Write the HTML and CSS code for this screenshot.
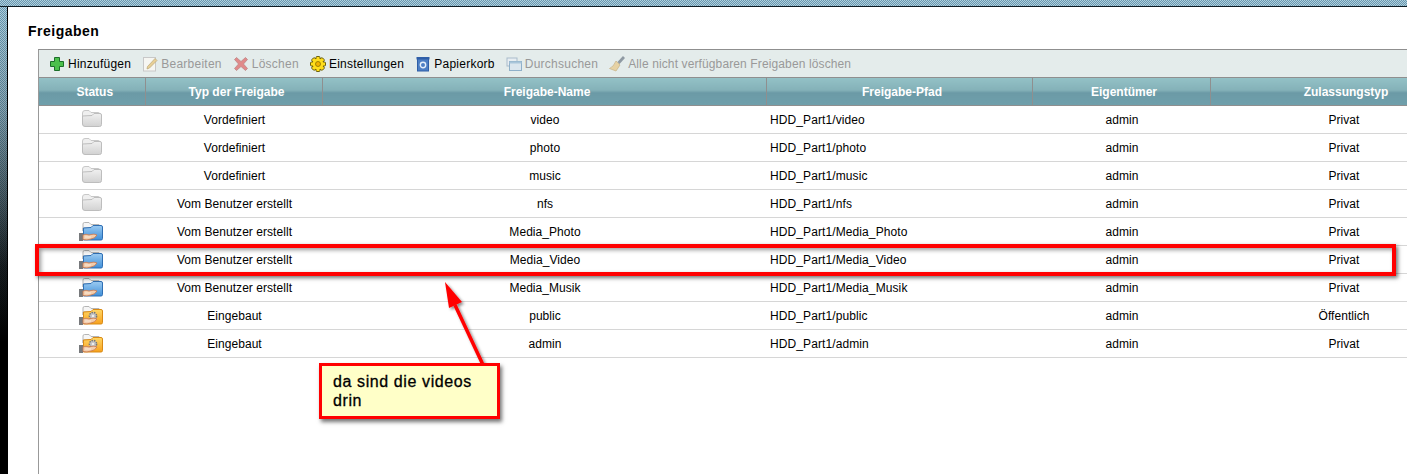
FILE: index.html
```html
<!DOCTYPE html>
<html lang="de">
<head>
    <meta charset="UTF-8">
    <title>Freigaben</title>
    <link rel="stylesheet" href="styles.css">
</head>
<body>
    <svg class="defs" width="0" height="0">
        <defs>
            <linearGradient id="greyFront" x1="0" y1="0" x2="0" y2="1"><stop offset="0" stop-color="#f0f0f0"/><stop offset="1" stop-color="#d2d2d2"/></linearGradient>
            <linearGradient id="blueFront" x1="0" y1="0" x2="0" y2="1"><stop offset="0" stop-color="#9ccbf2"/><stop offset="1" stop-color="#3f8fd8"/></linearGradient>
            <linearGradient id="orangeFront" x1="0" y1="0" x2="0" y2="1"><stop offset="0" stop-color="#ffd765"/><stop offset="1" stop-color="#f7a11d"/></linearGradient>
            <symbol id="folderGrey" viewBox="0 0 20 17">
                <path d="M0.500 3 Q0.500 0.500 3 0.500 H7 L9 2.500 H16 Q18 2.500 18 4.500 V7 H0.500Z" fill="#efefef" stroke="#c8c8c8"/>
                <path d="M0.500 6 L10 5.500 L12 3.500 H18 Q19.500 3.500 19.500 5 V14.500 Q19.500 16.500 17.500 16.500 H3 Q0.500 16.500 0.500 14Z" fill="url(#greyFront)" stroke="#bdbdbd"/>
            </symbol>
            <symbol id="hand" viewBox="0 0 24 20">
                <path d="M0 11 H4 V19 H0Z" fill="#77797c"/>
                <path d="M4 13 Q7 11.500 10 13 L12 12.500 Q15 11.500 18 13 Q16 16.500 12 17 Q8 18.500 4 17.500Z" fill="#f3cdac" stroke="#c9764a" stroke-width="0.800"/>
                <path d="M6 15 H12" stroke="#fff" stroke-width="0.600"/>
            </symbol>
            <symbol id="folderBlue" viewBox="0 0 24 20">
                <path d="M4 9 V2 Q4 0.500 5.500 0.500 H10 L12 2.500 H20 V6 H4Z" fill="#f6f6f6" stroke="#b5b5b5"/>
                <path d="M4.500 6 L12 5.500 L14 3.500 H22 Q23.500 3.500 23.500 5 V16.500 Q23.500 18 22 18 H4.500Z" fill="url(#blueFront)" stroke="#2f6fb4"/>
                <use href="#hand" width="24" height="20"/>
            </symbol>
            <symbol id="folderOrange" viewBox="0 0 24 20">
                <path d="M4 9 V2 Q4 0.500 5.500 0.500 H10 L12 2.500 H20 V6 H4Z" fill="#f6f6f6" stroke="#b5b5b5"/>
                <path d="M4.500 6 L12 5.500 L14 3.500 H22 Q23.500 3.500 23.500 5 V16.500 Q23.500 18 22 18 H4.500Z" fill="url(#orangeFront)" stroke="#d98a15"/>
                <circle cx="14" cy="10" r="3.600" fill="#c4c4c4" stroke="#777" stroke-width="1.500" stroke-dasharray="1.500 1"/>
                <circle cx="14" cy="10" r="1.200" fill="#eee"/>
                <use href="#hand" width="24" height="20"/>
            </symbol>
        </defs>
    </svg>

    <div class="top-band"></div>
    <div class="page">
        <div class="side-band"></div>
        <main class="window">
            <h1 class="title">Freigaben</h1>
            <section class="panel">
                <div class="toolbar">
                    <span class="tool">
                        <svg class="ico" viewBox="0 0 16 16"><path d="M5.500 1.500 H10.500 V5.500 H14.500 V10.500 H10.500 V14.500 H5.500 V10.500 H1.500 V5.500 H5.500Z" fill="#4cc04c" stroke="#1c6f2a"/></svg>
                        Hinzufügen
                    </span>
                    <span class="tool off">
                        <svg class="ico" viewBox="0 0 16 16"><rect x="1.500" y="1.500" width="12" height="13.500" fill="#f6f6f2" stroke="#c8c8c8"/><path d="M5.500 10.500 L13 2.500 L15 4.500 L7.500 12 L5 13Z" fill="#e8cf96" stroke="#b9a878" stroke-width="0.700"/></svg>
                        Bearbeiten
                    </span>
                    <span class="tool off">
                        <svg class="ico" viewBox="0 0 16 16"><path d="M1.500 3.500 L3.500 1.500 L8 5.500 L12.500 1.500 L14.500 3.500 L10.500 8 L14.500 12.500 L12.500 14.500 L8 10.500 L3.500 14.500 L1.500 12.500 L5.500 8Z" fill="#e08a8a" stroke="#b98080" stroke-width="0.700"/></svg>
                        Löschen
                    </span>
                    <span class="tool">
                        <svg class="ico" viewBox="0 0 16 16">
                            <g fill="#ffdd1c" stroke="#5e5200" stroke-width="0.900">
                                <rect x="6" y="0.500" width="4" height="15" rx="1"/>
                                <rect x="6" y="0.500" width="4" height="15" rx="1" transform="rotate(45 8 8)"/>
                                <rect x="6" y="0.500" width="4" height="15" rx="1" transform="rotate(90 8 8)"/>
                                <rect x="6" y="0.500" width="4" height="15" rx="1" transform="rotate(135 8 8)"/>
                            </g>
                            <circle cx="8" cy="8" r="5.400" fill="#ffdd1c"/>
                            <circle cx="8" cy="8" r="2.500" fill="#f3b400" stroke="#8a7200" stroke-width="0.800"/>
                        </svg>
                        Einstellungen
                    </span>
                    <span class="tool">
                        <svg class="ico" viewBox="0 0 16 16"><rect x="1.500" y="1" width="13" height="2.500" fill="#2f5fa8"/><rect x="2.500" y="3" width="11" height="12" fill="#4d7fc4" stroke="#2f5fa8"/><circle cx="8" cy="9" r="2.700" fill="none" stroke="#e6f0fa" stroke-width="1.400"/></svg>
                        Papierkorb
                    </span>
                    <span class="tool off">
                        <svg class="ico" viewBox="0 0 16 16"><rect x="1" y="2" width="10" height="8" fill="#e8eef2" stroke="#a9bccb"/><rect x="3.500" y="5.500" width="12" height="9" fill="#dbe6ee" stroke="#8fb0c9"/><rect x="3.500" y="5.500" width="12" height="2" fill="#a9c5da"/></svg>
                        Durchsuchen
                    </span>
                    <span class="tool off tool-long">
                        <svg class="ico" viewBox="0 0 16 16"><path d="M9.500 7 L15 1" stroke="#8f9aa3" stroke-width="2.800"/><path d="M7 5 L11 9 L7 15 L0.500 12.500 Q4.500 11 7 5Z" fill="#e6d2a4" stroke="#c7b285" stroke-width="0.700"/></svg>
                        Alle nicht verfügbaren Freigaben löschen
                    </span>
                </div>
                <table class="shares">
                    <colgroup>
                        <col class="c-status"><col class="c-type"><col class="c-name"><col class="c-path"><col class="c-owner"><col class="c-access">
                    </colgroup>
                    <thead>
                        <tr><th>Status</th><th>Typ der Freigabe</th><th>Freigabe-Name</th><th>Freigabe-Pfad</th><th>Eigentümer</th><th class="access-head">Zulassungstyp</th></tr>
                    </thead>
                    <tbody>
                        <tr><td class="status"><svg class="folder"><use href="#folderGrey" x="3" y="0" width="20" height="17"/></svg></td><td>Vordefiniert</td><td>video</td><td class="path">HDD_Part1/video</td><td>admin</td><td class="access">Privat</td></tr>
                        <tr><td class="status"><svg class="folder"><use href="#folderGrey" x="3" y="0" width="20" height="17"/></svg></td><td>Vordefiniert</td><td>photo</td><td class="path">HDD_Part1/photo</td><td>admin</td><td class="access">Privat</td></tr>
                        <tr><td class="status"><svg class="folder"><use href="#folderGrey" x="3" y="0" width="20" height="17"/></svg></td><td>Vordefiniert</td><td>music</td><td class="path">HDD_Part1/music</td><td>admin</td><td class="access">Privat</td></tr>
                        <tr><td class="status"><svg class="folder"><use href="#folderGrey" x="3" y="0" width="20" height="17"/></svg></td><td>Vom Benutzer erstellt</td><td>nfs</td><td class="path">HDD_Part1/nfs</td><td>admin</td><td class="access">Privat</td></tr>
                        <tr><td class="status"><svg class="folder"><use href="#folderBlue" width="24" height="20"/></svg></td><td>Vom Benutzer erstellt</td><td>Media_Photo</td><td class="path">HDD_Part1/Media_Photo</td><td>admin</td><td class="access">Privat</td></tr>
                        <tr><td class="status"><svg class="folder"><use href="#folderBlue" width="24" height="20"/></svg></td><td>Vom Benutzer erstellt</td><td>Media_Video</td><td class="path">HDD_Part1/Media_Video</td><td>admin</td><td class="access">Privat</td></tr>
                        <tr><td class="status"><svg class="folder"><use href="#folderBlue" width="24" height="20"/></svg></td><td>Vom Benutzer erstellt</td><td>Media_Musik</td><td class="path">HDD_Part1/Media_Musik</td><td>admin</td><td class="access">Privat</td></tr>
                        <tr><td class="status"><svg class="folder"><use href="#folderOrange" width="24" height="20"/></svg></td><td>Eingebaut</td><td>public</td><td class="path">HDD_Part1/public</td><td>admin</td><td class="access">Öffentlich</td></tr>
                        <tr><td class="status"><svg class="folder"><use href="#folderOrange" width="24" height="20"/></svg></td><td>Eingebaut</td><td>admin</td><td class="path">HDD_Part1/admin</td><td>admin</td><td class="access">Privat</td></tr>
                    </tbody>
                </table>
            </section>
        </main>
    </div>

    <!-- Annotations drawn over the screenshot -->
    <div class="mark"></div>
    <svg class="arrow" width="60" height="100" viewBox="0 0 60 100">
        <defs><filter id="arrowShadow" x="-30%" y="-30%" width="160%" height="160%"><feDropShadow dx="2" dy="2" stdDeviation="1.500" flood-color="#000" flood-opacity="0.450"/></filter></defs>
        <g filter="url(#arrowShadow)">
            <path d="M44 89 L15 27" stroke="#f00" stroke-width="3.500" fill="none"/>
            <path d="M5 4 L9 30 L22 24Z" fill="#f00"/>
        </g>
    </svg>
    <div class="note">da sind die videos drin</div>
</body>
</html>
```

FILE: styles.css
```css
html, body {
    margin: 0;
    height: 474px;
    overflow: hidden;
}

body {
    font-family: "Liberation Sans", Arial, sans-serif;
    font-size: 12px;
    color: #000;
    background-color: #fff;
    position: relative;
}

.defs {
    position: absolute;
}

.top-band {
    height: 6px;
    background: repeating-conic-gradient(#6797b0 0 25%, #b0cfdc 0 50%) 0 0 / 2px 2px;
    border-bottom: 1px solid #0b1a22;
}

.page {
    display: flex;
    height: 467px;
}

.side-band {
    width: 7px;
    background:
        linear-gradient(to bottom, rgba(0, 0, 0, 0) 0, rgba(0, 0, 0, 0.2) 100px, rgba(0, 0, 0, 0.55) 190px, rgba(0, 0, 0, 0.85) 260px, #000 335px),
        repeating-conic-gradient(#6797b0 0 25%, #b0cfdc 0 50%) 0 0 / 2px 2px;
    border-right: 1px solid #000;
}

.window {
    flex: 1;
    min-width: 0;
    padding: 16px 0 0 30px;
}

.title {
    margin: 0 0 10px -10px;
    font-size: 14px;
    line-height: 16px;
    letter-spacing: 0.5px;
    font-weight: bold;
}

.panel {
    border-left: 1px solid #999;
    border-top: 1px solid #8f8f8f;
    height: 425px;
    overflow: hidden;
}

.toolbar {
    display: flex;
    align-items: center;
    gap: 11px;
    height: 27px;
    padding-left: 10px;
    background-color: #e4eceb;
    border-bottom: 1px solid #8f8f8f;
}

.tool {
    display: flex;
    align-items: center;
    gap: 3px;
    white-space: nowrap;
    letter-spacing: 0.25px;
}

.tool.tool-long {
    letter-spacing: 0.12px;
}

.tool.off {
    color: #999;
}

.ico {
    width: 16px;
    height: 16px;
}

.shares {
    table-layout: fixed;
    border-collapse: collapse;
    width: 1443px;
}

.c-status { width: 106px; }
.c-type { width: 177px; }
.c-name { width: 444px; }
.c-path { width: 266px; }
.c-owner { width: 178px; }
.c-access { width: 272px; }

.shares th {
    height: 27px;
    padding: 0 0 0 6px;
    color: #fff;
    font-size: 12px;
    font-weight: bold;
    background: linear-gradient(to bottom, #93c1c6 0, #84b1b8 45%, #6b9aa6 55%, #6f9fab 100%);
    border-right: 1px solid #8f8f8f;
    border-bottom: 1px solid #8f8f8f;
}

.shares th.access-head {
    padding-left: 0;
}

.shares td {
    height: 27px;
    padding: 0 0 0 2px;
    text-align: center;
    letter-spacing: 0.05px;
    border-bottom: 1px solid #d6d6d6;
}

.shares td.status {
    padding-left: 0;
}

.shares td.path {
    text-align: left;
    padding-left: 4px;
    letter-spacing: 0.1px;
}

.shares td.access {
    padding-right: 6px;
}

.folder {
    display: block;
    width: 24px;
    height: 20px;
    margin-left: 40px;
}

.mark {
    position: absolute;
    left: 35px;
    top: 244px;
    width: 1353px;
    height: 24px;
    border: 4px solid #f00;
    box-shadow: 2px 2px 4px rgba(0, 0, 0, 0.55), inset 2px 2px 4px rgba(0, 0, 0, 0.4);
}

.arrow {
    position: absolute;
    left: 440px;
    top: 278px;
}

.note {
    position: absolute;
    left: 319px;
    top: 363px;
    box-sizing: border-box;
    width: 181px;
    height: 56px;
    padding: 6px 20px 0 11px;
    background-color: #ffffc8;
    border: 3px solid #f00;
    box-shadow: 2px 3px 4px rgba(0, 0, 0, 0.55);
    font-size: 16px;
    -webkit-text-stroke: 0.3px #000;
    letter-spacing: 0.6px;
    line-height: 19px;
}
```
